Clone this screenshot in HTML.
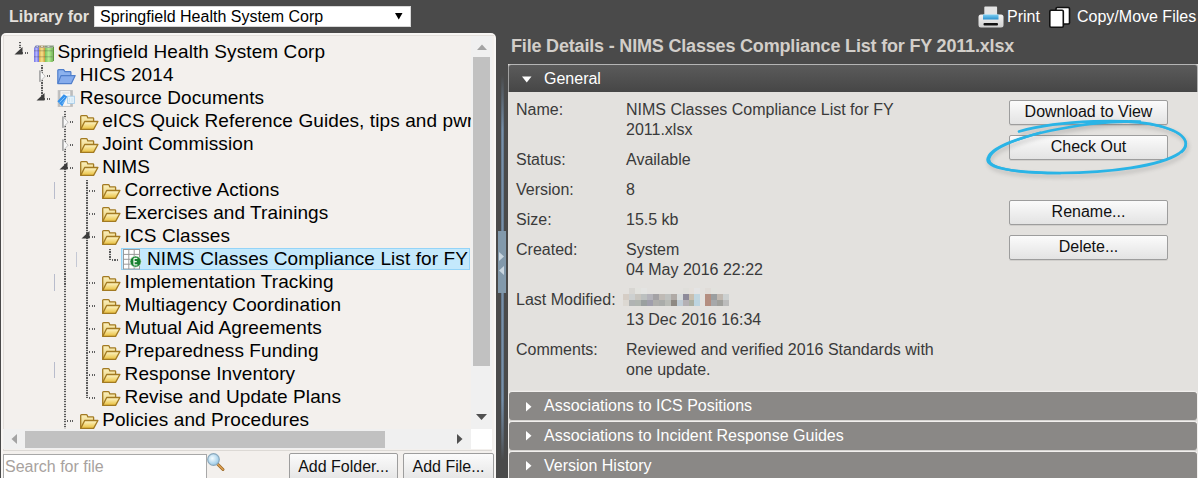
<!DOCTYPE html>
<html><head><meta charset="utf-8">
<style>
*{margin:0;padding:0}
html,body{width:1198px;height:478px;overflow:hidden;background:#4a4a4a;font-family:"Liberation Sans", sans-serif;position:relative}
.ab{position:absolute;white-space:nowrap}
.ic{position:absolute;display:block}
.vl{position:absolute;width:2px;background:repeating-linear-gradient(to bottom,#5a5a5a 0 1.25px,rgba(150,150,150,0.3) 1.25px 2.5px)}
.hl{position:absolute;height:2px;background:repeating-linear-gradient(to right,#606060 0 1.25px,transparent 1.25px 2.5px)}
.tt{position:absolute;white-space:nowrap;font-size:19px;line-height:23px;letter-spacing:0.09px;color:#000}
.lbl{position:absolute;left:516px;margin-top:1px;font-size:16px;line-height:20px;color:#3a3a3a;white-space:nowrap}
.val{position:absolute;left:626px;margin-top:1px;font-size:16px;line-height:20px;color:#3a3a3a;white-space:nowrap}
.btn{position:absolute;box-sizing:border-box;border:1px solid #9d9d9d;border-radius:2px;background:linear-gradient(#fbfbfb,#e3e3e3);font-size:16px;line-height:22px;text-align:center;color:#111;white-space:nowrap;box-shadow:0 1px 0 rgba(0,0,0,0.08)}
.acc{position:absolute;left:508px;width:690px;height:30px;box-sizing:border-box;background:#8a8886;border:1px solid #f2f0ee;border-bottom:1px solid #d6d4d1;border-radius:4px;color:#fff;font-size:16px;line-height:28px}
</style></head><body>
<!-- top bar -->
<div class="ab" style="left:9px;top:5px;font-size:16px;font-weight:bold;line-height:24px;color:#e4e0dc">Library for</div>
<div class="ab" style="left:94px;top:6px;width:317px;height:21px;background:#fff;box-sizing:border-box;border:1px solid #d8d8d8"></div>
<div class="ab" style="left:100px;top:6px;font-size:16px;line-height:22px;color:#000">Springfield Health System Corp</div>
<svg class="ic" style="left:395px;top:13px" width="8" height="7" viewBox="0 0 8 7"><path d="M0,0 H7.5 L3.75,6.5 Z" fill="#000"/></svg>

<!-- print icon -->
<svg class="ic" style="left:978px;top:6px" width="26" height="22" viewBox="0 0 26 22">
<defs><linearGradient id="pb" x1="0" y1="0" x2="0" y2="1"><stop offset="0" stop-color="#f4f4f4"/><stop offset="1" stop-color="#cfcfcf"/></linearGradient>
<linearGradient id="pbl" x1="0" y1="0" x2="0" y2="1"><stop offset="0" stop-color="#7fd0f4"/><stop offset="1" stop-color="#2a90cc"/></linearGradient></defs>
<rect x="6.3" y="0.6" width="12.8" height="9" rx="0.8" fill="#e4e4e4"/>
<rect x="0.5" y="8.5" width="25" height="13" rx="2.5" fill="url(#pb)"/>
<rect x="5" y="8.5" width="15.5" height="5" fill="url(#pbl)"/>
<rect x="5.5" y="17" width="14.5" height="2.6" rx="1" fill="#111"/>
</svg>
<div class="ab" style="left:1007px;top:6px;font-size:16px;line-height:22px;color:#fff">Print</div>
<!-- copy icon -->
<svg class="ic" style="left:1048px;top:6px" width="24" height="23" viewBox="0 0 24 23">
<rect x="8" y="1.5" width="13.5" height="16.5" rx="1.2" fill="#fff" stroke="#111" stroke-width="1.6"/>
<rect x="1.8" y="4.3" width="13.5" height="17" rx="1.2" fill="#fff" stroke="#111" stroke-width="1.6"/>
</svg>
<div class="ab" style="left:1077px;top:6px;font-size:16px;line-height:22px;color:#fff">Copy/Move Files</div>

<!-- tree panel -->
<div class="ab" style="left:1px;top:33px;width:495px;height:460px;background:#f8f6f4;border-radius:5px 5px 0 0"></div>
<div class="ab" style="left:3px;top:35px;width:490px;height:414px;background:#f3f0ed;border-top:1px solid #e4e0dc;border-left:1px solid #e8e4e0"></div>
<div class="ab" style="left:3px;top:450px;width:489px;height:28px;background:#f3f0ed;border-top:1px solid #dcd9d5"></div>
<div class="ab" style="left:3px;top:36px;width:1px;height:414px;background:#e2deda"></div>
<!-- tree viewport -->
<div class="ab" style="left:3px;top:36px;width:468px;height:393px;overflow:hidden">
<div style="position:absolute;left:-3px;top:-36px;width:600px;height:500px">
<div style="position:absolute;left:121px;top:248px;width:349px;height:22px;box-sizing:border-box;background:#c4e9fc;border:1px solid #94d4f8"></div>
<div class="vl" style="left:19px;top:42px;height:6px"></div>
<div class="vl" style="left:41px;top:65px;height:31px"></div>
<div class="vl" style="left:64px;top:111px;height:319px"></div>
<div class="vl" style="left:86px;top:180px;height:218px"></div>
<div class="vl" style="left:109px;top:249px;height:11px"></div>
<div class="hl" style="left:22px;top:52px;width:6px"></div>
<svg class="ic" style="left:14px;top:47px" width="9" height="8" viewBox="0 0 9 8"><path d="M0.5,7.5 L8.5,7.5 L8.5,0 Z" fill="#3c3c3c"/></svg>
<svg class="ic" style="left:34px;top:44.5px" width="21" height="18" viewBox="0 0 21 18">
<defs>
<linearGradient id="bkp" x1="0" y1="0" x2="1" y2="0"><stop offset="0" stop-color="#7676e6"/><stop offset="0.5" stop-color="#b4b4ff"/><stop offset="1" stop-color="#6c6cd8"/></linearGradient>
<linearGradient id="bky" x1="0" y1="0" x2="1" y2="0"><stop offset="0" stop-color="#d8ae48"/><stop offset="0.5" stop-color="#f8e08c"/><stop offset="1" stop-color="#c89c3c"/></linearGradient>
<linearGradient id="bkg" x1="0" y1="0" x2="1" y2="0"><stop offset="0" stop-color="#78c058"/><stop offset="0.5" stop-color="#b8ec98"/><stop offset="1" stop-color="#78c058"/></linearGradient>
</defs>
<rect x="0" y="2.8" width="5" height="14.2" fill="url(#bkp)"/>
<rect x="5" y="2.8" width="6" height="14.2" fill="url(#bky)"/>
<rect x="11" y="2.8" width="7.5" height="14.2" fill="url(#bkg)"/>
<path d="M18.5,2.8 L20,1 V15.5 L18.5,17 Z" fill="#5a9838"/>
<path d="M0,2.8 L1.8,0.6 H5.5 L5,2.8 Z" fill="#6f76b8"/>
<path d="M5,2.8 L5.5,0.6 H10.5 L11,2.8 Z" fill="#a89468"/>
<path d="M11,2.8 L10.5,0.6 H20 L18.5,2.8 Z" fill="#889a80"/>
<path d="M2.5,1.4 H4 M7,1.4 H9 M13.5,1.4 H15.5" stroke="#e8ecf4" stroke-width="0.8"/>
<path d="M0,5.8 H18.5 M0,11.8 H18.5" stroke="#404040" stroke-width="0.7" opacity="0.45"/>
</svg>
<div class="tt" style="left:57.4px;top:39.5px">Springfield Health System Corp</div>
<div class="hl" style="left:44px;top:75px;width:6px"></div>
<svg class="ic" style="left:39px;top:70px" width="7" height="13" viewBox="0 0 7 13"><path d="M0.9,0.6 L6.2,6.2 L0.9,11.8 Z" fill="#f8f8f8" stroke="#c4c4c4" stroke-width="1"/><path d="M0.9,0.6 V11.8" stroke="#a0a0a0" stroke-width="1.4"/></svg>
<svg class="ic" style="left:57px;top:69px" width="19" height="16" viewBox="0 0 19 16">
<path d="M0.8,14.6 V1.6 Q0.8,0.6 1.8,0.6 H6.6 L8,2.6 H13.2 Q13.9,2.6 13.9,3.4 V7" fill="#8cb2ee" stroke="#4f7ecb" stroke-width="1.2"/>
<path d="M4,6.6 H18.2 L14.4,14.6 H0.8 Z" fill="#86acec" stroke="#4f7ecb" stroke-width="1.2" stroke-linejoin="round"/>
</svg>
<div class="tt" style="left:79.8px;top:62.5px">HICS 2014</div>
<div class="hl" style="left:44px;top:98px;width:6px"></div>
<svg class="ic" style="left:36px;top:93px" width="9" height="8" viewBox="0 0 9 8"><path d="M0.5,7.5 L8.5,7.5 L8.5,0 Z" fill="#3c3c3c"/></svg>
<svg class="ic" style="left:57px;top:90px" width="20" height="18" viewBox="0 0 20 18">
<rect x="1.2" y="0.6" width="14.2" height="15.8" fill="#f6f6f6" stroke="#c4c4c4" stroke-width="1"/>
<rect x="1.2" y="0.6" width="2.2" height="15.8" fill="#bdbdbd"/>
<rect x="13.2" y="0.6" width="2.2" height="15.8" fill="#bdbdbd"/>
<rect x="4.5" y="2.2" width="8" height="1.5" fill="#e0e0e0"/>
<rect x="10.6" y="6.2" width="6.8" height="7.2" fill="#e4f2fb" stroke="#a6cdea" stroke-width="0.9"/>
<path d="M12.5,8 V12 M15,8 V12" stroke="#c8e0f0" stroke-width="0.8"/>
<path d="M0.4,11.2 L6.8,4.2 L10.2,6.6 L5.2,16.6 Z" fill="#3592ec"/>
<path d="M2.6,12.6 L7.8,7.2 M5,13.8 L9,9" stroke="#9fd2fa" stroke-width="0.8"/>
</svg>
<div class="tt" style="left:79.8px;top:85.5px">Resource Documents</div>
<div class="hl" style="left:67px;top:121px;width:6px"></div>
<svg class="ic" style="left:62px;top:116px" width="7" height="13" viewBox="0 0 7 13"><path d="M0.9,0.6 L6.2,6.2 L0.9,11.8 Z" fill="#f8f8f8" stroke="#c4c4c4" stroke-width="1"/><path d="M0.9,0.6 V11.8" stroke="#a0a0a0" stroke-width="1.4"/></svg>
<svg class="ic" style="left:80px;top:115px" width="19" height="16" viewBox="0 0 19 16">
<defs><linearGradient id="fg80_115" x1="0" y1="0" x2="0" y2="1"><stop offset="0" stop-color="#fff8cc"/><stop offset="1" stop-color="#e8be3a"/></linearGradient>
<linearGradient id="bfg80_115" x1="0" y1="0" x2="0" y2="1"><stop offset="0" stop-color="#fbf0bc"/><stop offset="1" stop-color="#e6cb70"/></linearGradient></defs>
<path d="M0.7,14.4 V1.5 Q0.7,0.7 1.5,0.7 H6.3 Q6.9,0.7 7.2,1.3 L7.8,2.9 H12.9 Q13.6,2.9 13.6,3.6 V7" fill="url(#bfg80_115)" stroke="#a27a22" stroke-width="1.3"/>
<path d="M4.7,6.5 H17.9 L13.6,14.4 H0.7 Z" fill="url(#fg80_115)" stroke="#a27a22" stroke-width="1.3" stroke-linejoin="round"/>
</svg>
<div class="tt" style="left:102.2px;top:108.5px">eICS Quick Reference Guides, tips and pwr</div>
<div class="hl" style="left:67px;top:144px;width:6px"></div>
<svg class="ic" style="left:62px;top:139px" width="7" height="13" viewBox="0 0 7 13"><path d="M0.9,0.6 L6.2,6.2 L0.9,11.8 Z" fill="#f8f8f8" stroke="#c4c4c4" stroke-width="1"/><path d="M0.9,0.6 V11.8" stroke="#a0a0a0" stroke-width="1.4"/></svg>
<svg class="ic" style="left:80px;top:138px" width="19" height="16" viewBox="0 0 19 16">
<defs><linearGradient id="fg80_138" x1="0" y1="0" x2="0" y2="1"><stop offset="0" stop-color="#fff8cc"/><stop offset="1" stop-color="#e8be3a"/></linearGradient>
<linearGradient id="bfg80_138" x1="0" y1="0" x2="0" y2="1"><stop offset="0" stop-color="#fbf0bc"/><stop offset="1" stop-color="#e6cb70"/></linearGradient></defs>
<path d="M0.7,14.4 V1.5 Q0.7,0.7 1.5,0.7 H6.3 Q6.9,0.7 7.2,1.3 L7.8,2.9 H12.9 Q13.6,2.9 13.6,3.6 V7" fill="url(#bfg80_138)" stroke="#a27a22" stroke-width="1.3"/>
<path d="M4.7,6.5 H17.9 L13.6,14.4 H0.7 Z" fill="url(#fg80_138)" stroke="#a27a22" stroke-width="1.3" stroke-linejoin="round"/>
</svg>
<div class="tt" style="left:102.2px;top:131.5px">Joint Commission</div>
<div class="hl" style="left:67px;top:167px;width:6px"></div>
<svg class="ic" style="left:59px;top:162px" width="9" height="8" viewBox="0 0 9 8"><path d="M0.5,7.5 L8.5,7.5 L8.5,0 Z" fill="#3c3c3c"/></svg>
<svg class="ic" style="left:80px;top:161px" width="19" height="16" viewBox="0 0 19 16">
<defs><linearGradient id="fg80_161" x1="0" y1="0" x2="0" y2="1"><stop offset="0" stop-color="#fff8cc"/><stop offset="1" stop-color="#e8be3a"/></linearGradient>
<linearGradient id="bfg80_161" x1="0" y1="0" x2="0" y2="1"><stop offset="0" stop-color="#fbf0bc"/><stop offset="1" stop-color="#e6cb70"/></linearGradient></defs>
<path d="M0.7,14.4 V1.5 Q0.7,0.7 1.5,0.7 H6.3 Q6.9,0.7 7.2,1.3 L7.8,2.9 H12.9 Q13.6,2.9 13.6,3.6 V7" fill="url(#bfg80_161)" stroke="#a27a22" stroke-width="1.3"/>
<path d="M4.7,6.5 H17.9 L13.6,14.4 H0.7 Z" fill="url(#fg80_161)" stroke="#a27a22" stroke-width="1.3" stroke-linejoin="round"/>
</svg>
<div class="tt" style="left:102.2px;top:154.5px">NIMS</div>
<div class="hl" style="left:89px;top:190px;width:6px"></div>
<svg class="ic" style="left:102px;top:184px" width="19" height="16" viewBox="0 0 19 16">
<defs><linearGradient id="fg102_184" x1="0" y1="0" x2="0" y2="1"><stop offset="0" stop-color="#fff8cc"/><stop offset="1" stop-color="#e8be3a"/></linearGradient>
<linearGradient id="bfg102_184" x1="0" y1="0" x2="0" y2="1"><stop offset="0" stop-color="#fbf0bc"/><stop offset="1" stop-color="#e6cb70"/></linearGradient></defs>
<path d="M0.7,14.4 V1.5 Q0.7,0.7 1.5,0.7 H6.3 Q6.9,0.7 7.2,1.3 L7.8,2.9 H12.9 Q13.6,2.9 13.6,3.6 V7" fill="url(#bfg102_184)" stroke="#a27a22" stroke-width="1.3"/>
<path d="M4.7,6.5 H17.9 L13.6,14.4 H0.7 Z" fill="url(#fg102_184)" stroke="#a27a22" stroke-width="1.3" stroke-linejoin="round"/>
</svg>
<div class="tt" style="left:124.6px;top:177.5px">Corrective Actions</div>
<div class="hl" style="left:89px;top:213px;width:6px"></div>
<svg class="ic" style="left:102px;top:207px" width="19" height="16" viewBox="0 0 19 16">
<defs><linearGradient id="fg102_207" x1="0" y1="0" x2="0" y2="1"><stop offset="0" stop-color="#fff8cc"/><stop offset="1" stop-color="#e8be3a"/></linearGradient>
<linearGradient id="bfg102_207" x1="0" y1="0" x2="0" y2="1"><stop offset="0" stop-color="#fbf0bc"/><stop offset="1" stop-color="#e6cb70"/></linearGradient></defs>
<path d="M0.7,14.4 V1.5 Q0.7,0.7 1.5,0.7 H6.3 Q6.9,0.7 7.2,1.3 L7.8,2.9 H12.9 Q13.6,2.9 13.6,3.6 V7" fill="url(#bfg102_207)" stroke="#a27a22" stroke-width="1.3"/>
<path d="M4.7,6.5 H17.9 L13.6,14.4 H0.7 Z" fill="url(#fg102_207)" stroke="#a27a22" stroke-width="1.3" stroke-linejoin="round"/>
</svg>
<div class="tt" style="left:124.6px;top:200.5px">Exercises and Trainings</div>
<div class="hl" style="left:89px;top:236px;width:6px"></div>
<svg class="ic" style="left:81px;top:231px" width="9" height="8" viewBox="0 0 9 8"><path d="M0.5,7.5 L8.5,7.5 L8.5,0 Z" fill="#3c3c3c"/></svg>
<svg class="ic" style="left:102px;top:230px" width="19" height="16" viewBox="0 0 19 16">
<defs><linearGradient id="fg102_230" x1="0" y1="0" x2="0" y2="1"><stop offset="0" stop-color="#fff8cc"/><stop offset="1" stop-color="#e8be3a"/></linearGradient>
<linearGradient id="bfg102_230" x1="0" y1="0" x2="0" y2="1"><stop offset="0" stop-color="#fbf0bc"/><stop offset="1" stop-color="#e6cb70"/></linearGradient></defs>
<path d="M0.7,14.4 V1.5 Q0.7,0.7 1.5,0.7 H6.3 Q6.9,0.7 7.2,1.3 L7.8,2.9 H12.9 Q13.6,2.9 13.6,3.6 V7" fill="url(#bfg102_230)" stroke="#a27a22" stroke-width="1.3"/>
<path d="M4.7,6.5 H17.9 L13.6,14.4 H0.7 Z" fill="url(#fg102_230)" stroke="#a27a22" stroke-width="1.3" stroke-linejoin="round"/>
</svg>
<div class="tt" style="left:124.6px;top:223.5px">ICS Classes</div>
<div class="hl" style="left:112px;top:259px;width:6px"></div>
<svg class="ic" style="left:123px;top:249px" width="20" height="21" viewBox="0 0 20 21">
<rect x="0.5" y="0.5" width="16" height="19.5" fill="#fff" stroke="#9a9a9a" stroke-width="1"/>
<path d="M5.8,0.5 V20 M11.2,0.5 V20 M0.5,5.4 H16.5 M0.5,10.3 H16.5 M0.5,15.2 H16.5" stroke="#9a9a9a" stroke-width="1"/>
<circle cx="12.6" cy="12.6" r="5.6" fill="#17802f" stroke="#e6f2e6" stroke-width="0.7"/>
<path d="M10.8,9.4 H14.4 M10.8,12.6 H13.8 M10.8,15.8 H14.4 M11,9.4 V15.8" stroke="#e8f4e8" stroke-width="1.3"/>
</svg>
<div class="tt" style="left:147.0px;top:246.5px">NIMS Classes Compliance List for FY 2011.xlsx</div>
<div class="hl" style="left:89px;top:282px;width:6px"></div>
<svg class="ic" style="left:102px;top:276px" width="19" height="16" viewBox="0 0 19 16">
<defs><linearGradient id="fg102_276" x1="0" y1="0" x2="0" y2="1"><stop offset="0" stop-color="#fff8cc"/><stop offset="1" stop-color="#e8be3a"/></linearGradient>
<linearGradient id="bfg102_276" x1="0" y1="0" x2="0" y2="1"><stop offset="0" stop-color="#fbf0bc"/><stop offset="1" stop-color="#e6cb70"/></linearGradient></defs>
<path d="M0.7,14.4 V1.5 Q0.7,0.7 1.5,0.7 H6.3 Q6.9,0.7 7.2,1.3 L7.8,2.9 H12.9 Q13.6,2.9 13.6,3.6 V7" fill="url(#bfg102_276)" stroke="#a27a22" stroke-width="1.3"/>
<path d="M4.7,6.5 H17.9 L13.6,14.4 H0.7 Z" fill="url(#fg102_276)" stroke="#a27a22" stroke-width="1.3" stroke-linejoin="round"/>
</svg>
<div class="tt" style="left:124.6px;top:269.5px">Implementation Tracking</div>
<div class="hl" style="left:89px;top:305px;width:6px"></div>
<svg class="ic" style="left:102px;top:299px" width="19" height="16" viewBox="0 0 19 16">
<defs><linearGradient id="fg102_299" x1="0" y1="0" x2="0" y2="1"><stop offset="0" stop-color="#fff8cc"/><stop offset="1" stop-color="#e8be3a"/></linearGradient>
<linearGradient id="bfg102_299" x1="0" y1="0" x2="0" y2="1"><stop offset="0" stop-color="#fbf0bc"/><stop offset="1" stop-color="#e6cb70"/></linearGradient></defs>
<path d="M0.7,14.4 V1.5 Q0.7,0.7 1.5,0.7 H6.3 Q6.9,0.7 7.2,1.3 L7.8,2.9 H12.9 Q13.6,2.9 13.6,3.6 V7" fill="url(#bfg102_299)" stroke="#a27a22" stroke-width="1.3"/>
<path d="M4.7,6.5 H17.9 L13.6,14.4 H0.7 Z" fill="url(#fg102_299)" stroke="#a27a22" stroke-width="1.3" stroke-linejoin="round"/>
</svg>
<div class="tt" style="left:124.6px;top:292.5px">Multiagency Coordination</div>
<div class="hl" style="left:89px;top:328px;width:6px"></div>
<svg class="ic" style="left:102px;top:322px" width="19" height="16" viewBox="0 0 19 16">
<defs><linearGradient id="fg102_322" x1="0" y1="0" x2="0" y2="1"><stop offset="0" stop-color="#fff8cc"/><stop offset="1" stop-color="#e8be3a"/></linearGradient>
<linearGradient id="bfg102_322" x1="0" y1="0" x2="0" y2="1"><stop offset="0" stop-color="#fbf0bc"/><stop offset="1" stop-color="#e6cb70"/></linearGradient></defs>
<path d="M0.7,14.4 V1.5 Q0.7,0.7 1.5,0.7 H6.3 Q6.9,0.7 7.2,1.3 L7.8,2.9 H12.9 Q13.6,2.9 13.6,3.6 V7" fill="url(#bfg102_322)" stroke="#a27a22" stroke-width="1.3"/>
<path d="M4.7,6.5 H17.9 L13.6,14.4 H0.7 Z" fill="url(#fg102_322)" stroke="#a27a22" stroke-width="1.3" stroke-linejoin="round"/>
</svg>
<div class="tt" style="left:124.6px;top:315.5px">Mutual Aid Agreements</div>
<div class="hl" style="left:89px;top:351px;width:6px"></div>
<svg class="ic" style="left:102px;top:345px" width="19" height="16" viewBox="0 0 19 16">
<defs><linearGradient id="fg102_345" x1="0" y1="0" x2="0" y2="1"><stop offset="0" stop-color="#fff8cc"/><stop offset="1" stop-color="#e8be3a"/></linearGradient>
<linearGradient id="bfg102_345" x1="0" y1="0" x2="0" y2="1"><stop offset="0" stop-color="#fbf0bc"/><stop offset="1" stop-color="#e6cb70"/></linearGradient></defs>
<path d="M0.7,14.4 V1.5 Q0.7,0.7 1.5,0.7 H6.3 Q6.9,0.7 7.2,1.3 L7.8,2.9 H12.9 Q13.6,2.9 13.6,3.6 V7" fill="url(#bfg102_345)" stroke="#a27a22" stroke-width="1.3"/>
<path d="M4.7,6.5 H17.9 L13.6,14.4 H0.7 Z" fill="url(#fg102_345)" stroke="#a27a22" stroke-width="1.3" stroke-linejoin="round"/>
</svg>
<div class="tt" style="left:124.6px;top:338.5px">Preparedness Funding</div>
<div class="hl" style="left:89px;top:374px;width:6px"></div>
<svg class="ic" style="left:102px;top:368px" width="19" height="16" viewBox="0 0 19 16">
<defs><linearGradient id="fg102_368" x1="0" y1="0" x2="0" y2="1"><stop offset="0" stop-color="#fff8cc"/><stop offset="1" stop-color="#e8be3a"/></linearGradient>
<linearGradient id="bfg102_368" x1="0" y1="0" x2="0" y2="1"><stop offset="0" stop-color="#fbf0bc"/><stop offset="1" stop-color="#e6cb70"/></linearGradient></defs>
<path d="M0.7,14.4 V1.5 Q0.7,0.7 1.5,0.7 H6.3 Q6.9,0.7 7.2,1.3 L7.8,2.9 H12.9 Q13.6,2.9 13.6,3.6 V7" fill="url(#bfg102_368)" stroke="#a27a22" stroke-width="1.3"/>
<path d="M4.7,6.5 H17.9 L13.6,14.4 H0.7 Z" fill="url(#fg102_368)" stroke="#a27a22" stroke-width="1.3" stroke-linejoin="round"/>
</svg>
<div class="tt" style="left:124.6px;top:361.5px">Response Inventory</div>
<div class="hl" style="left:89px;top:397px;width:6px"></div>
<svg class="ic" style="left:102px;top:391px" width="19" height="16" viewBox="0 0 19 16">
<defs><linearGradient id="fg102_391" x1="0" y1="0" x2="0" y2="1"><stop offset="0" stop-color="#fff8cc"/><stop offset="1" stop-color="#e8be3a"/></linearGradient>
<linearGradient id="bfg102_391" x1="0" y1="0" x2="0" y2="1"><stop offset="0" stop-color="#fbf0bc"/><stop offset="1" stop-color="#e6cb70"/></linearGradient></defs>
<path d="M0.7,14.4 V1.5 Q0.7,0.7 1.5,0.7 H6.3 Q6.9,0.7 7.2,1.3 L7.8,2.9 H12.9 Q13.6,2.9 13.6,3.6 V7" fill="url(#bfg102_391)" stroke="#a27a22" stroke-width="1.3"/>
<path d="M4.7,6.5 H17.9 L13.6,14.4 H0.7 Z" fill="url(#fg102_391)" stroke="#a27a22" stroke-width="1.3" stroke-linejoin="round"/>
</svg>
<div class="tt" style="left:124.6px;top:384.5px">Revise and Update Plans</div>
<div class="hl" style="left:67px;top:420px;width:6px"></div>
<svg class="ic" style="left:80px;top:414px" width="19" height="16" viewBox="0 0 19 16">
<defs><linearGradient id="fg80_414" x1="0" y1="0" x2="0" y2="1"><stop offset="0" stop-color="#fff8cc"/><stop offset="1" stop-color="#e8be3a"/></linearGradient>
<linearGradient id="bfg80_414" x1="0" y1="0" x2="0" y2="1"><stop offset="0" stop-color="#fbf0bc"/><stop offset="1" stop-color="#e6cb70"/></linearGradient></defs>
<path d="M0.7,14.4 V1.5 Q0.7,0.7 1.5,0.7 H6.3 Q6.9,0.7 7.2,1.3 L7.8,2.9 H12.9 Q13.6,2.9 13.6,3.6 V7" fill="url(#bfg80_414)" stroke="#a27a22" stroke-width="1.3"/>
<path d="M4.7,6.5 H17.9 L13.6,14.4 H0.7 Z" fill="url(#fg80_414)" stroke="#a27a22" stroke-width="1.3" stroke-linejoin="round"/>
</svg>
<div class="tt" style="left:102.2px;top:407.5px">Policies and Procedures</div>
<div style="position:absolute;left:54px;top:182px;width:1px;height:17px;background:#b8bccc"></div>
<div style="position:absolute;left:76px;top:252px;width:1px;height:15px;background:#c4c8d4"></div>
<div style="position:absolute;left:54px;top:274px;width:1px;height:17px;background:#b8bccc"></div>
<div style="position:absolute;left:54px;top:362px;width:1px;height:16px;background:#b8bccc"></div>
</div></div>
<!-- vertical scrollbar -->
<div class="ab" style="left:471px;top:36px;width:21px;height:393px;background:#f0f0f0"></div>
<div class="ab" style="left:473px;top:57px;width:17px;height:309px;background:#c1c1c1"></div>
<svg class="ic" style="left:477px;top:44px" width="10" height="6" viewBox="0 0 10 6"><path d="M0,6 H10 L5,0.5 Z" fill="#a3a3a3"/></svg>
<svg class="ic" style="left:476px;top:414px" width="11" height="6" viewBox="0 0 11 6"><path d="M0,0 H11 L5.5,6 Z" fill="#505050"/></svg>
<!-- horizontal scrollbar -->
<div class="ab" style="left:3px;top:429px;width:468px;height:20px;background:#f0f0f0"></div>
<div class="ab" style="left:25px;top:431px;width:360px;height:17px;background:#c1c1c1"></div>
<svg class="ic" style="left:11px;top:434px" width="6" height="10" viewBox="0 0 6 10"><path d="M6,0 V10 L0.5,5 Z" fill="#a3a3a3"/></svg>
<svg class="ic" style="left:457px;top:434px" width="6" height="10" viewBox="0 0 6 10"><path d="M0,0 V10 L5.5,5 Z" fill="#505050"/></svg>
<div class="ab" style="left:471px;top:429px;width:21px;height:20px;background:#fff"></div>
<!-- search -->
<div class="ab" style="left:3px;top:454px;width:204px;height:30px;background:#fff;box-sizing:border-box;border:1px solid #a8a8a8"></div>
<div class="ab" style="left:5px;top:456px;font-size:16px;line-height:22px;color:#a8a29e">Search for file</div>
<svg class="ic" style="left:206px;top:452px" width="20" height="20" viewBox="0 0 20 20">
<defs><radialGradient id="mg" cx="0.4" cy="0.4" r="0.6"><stop offset="0" stop-color="#f4fcff"/><stop offset="1" stop-color="#9ccbe8"/></radialGradient></defs>
<path d="M11,11.5 L17,17.5" stroke="#9a6a2a" stroke-width="3" stroke-linecap="round"/>
<path d="M11,11.5 L17,17.5" stroke="#e0a050" stroke-width="1.4" stroke-linecap="round"/>
<circle cx="7.5" cy="7.5" r="5.8" fill="url(#mg)" stroke="#8aa8bc" stroke-width="1.2"/>
</svg>
<div class="btn" style="left:289px;top:453px;width:109px;height:30px;line-height:26px">Add Folder...</div>
<div class="btn" style="left:403px;top:453px;width:91px;height:30px;line-height:26px">Add File...</div>

<!-- splitter -->
<div class="ab" style="left:501px;top:75px;width:3px;height:403px;background:linear-gradient(to bottom,rgba(74,74,74,1) 0,rgba(74,74,74,0) 55px,rgba(74,74,74,0) 325px,rgba(74,74,74,0.6) 365px,rgba(74,74,74,1) 385px),linear-gradient(to right,#5c7086,#7890a8 50%,#5c7086)"></div>
<div class="ab" style="left:498px;top:231px;width:8px;height:62px;background:#8299ab"></div>
<svg class="ic" style="left:498px;top:249.5px" width="8" height="30" viewBox="0 0 8 30"><path d="M1,2 L6,6.5 L1,11 Z" fill="#c9d6e0"/><path d="M6,16 L1,20.5 L6,25 Z" fill="#c9d6e0"/></svg>

<!-- header -->
<div class="ab" style="left:511px;top:34px;font-size:18px;font-weight:bold;line-height:24px;letter-spacing:-0.18px;color:#d2cec9">File Details - NIMS Classes Compliance List for FY 2011.xlsx</div>

<!-- General panel -->
<div class="ab" style="left:508px;top:64px;width:690px;height:326px;background:#e3e1de"></div>
<div class="ab" style="left:508px;top:64px;width:690px;height:28px;box-sizing:border-box;background:linear-gradient(#5b5b5b,#464646);border-top:1px solid #b5b5b5;border-left:1px solid #a0a0a0;border-right:1px solid #b0b0b0;border-radius:3px 3px 0 0"></div>
<svg class="ic" style="left:522px;top:76px" width="10" height="7" viewBox="0 0 10 7"><path d="M0,0.5 H9.5 L4.75,6.5 Z" fill="#fff"/></svg>
<div class="ab" style="left:544px;top:68px;font-size:16px;line-height:22px;color:#fff">General</div>

<div class="lbl" style="top:99px">Name:</div>
<div class="val" style="top:99px">NIMS Classes Compliance List for FY<br>2011.xlsx</div>
<div class="lbl" style="top:149px">Status:</div>
<div class="val" style="top:149px">Available</div>
<div class="lbl" style="top:179px">Version:</div>
<div class="val" style="top:179px">8</div>
<div class="lbl" style="top:209px">Size:</div>
<div class="val" style="top:209px">15.5 kb</div>
<div class="lbl" style="top:239px">Created:</div>
<div class="val" style="top:239px">System<br>04 May 2016 22:22</div>
<div class="lbl" style="top:289px">Last Modified:</div>
<div style="position:absolute;left:629.0px;top:288px;width:6px;height:6px;background:#d8d6d2"></div>
<div style="position:absolute;left:634.9px;top:288px;width:6px;height:6px;background:#e2e2de"></div>
<div style="position:absolute;left:640.9px;top:288px;width:6px;height:6px;background:#e4e4e2"></div>
<div style="position:absolute;left:682.5px;top:288px;width:6px;height:6px;background:#e0dfdb"></div>
<div style="position:absolute;left:688.5px;top:288px;width:6px;height:6px;background:#e4e0dc"></div>
<div style="position:absolute;left:694.4px;top:288px;width:6px;height:6px;background:#e4e4e4"></div>
<div style="position:absolute;left:705.0px;top:288px;width:6px;height:6px;background:#e0dcd8"></div>
<div style="position:absolute;left:711.0px;top:288px;width:6px;height:6px;background:#e2e2de"></div>
<div style="position:absolute;left:623.0px;top:294px;width:6px;height:6px;background:#d5cdc5"></div>
<div style="position:absolute;left:629.0px;top:294px;width:6px;height:6px;background:#cdd0d0"></div>
<div style="position:absolute;left:634.9px;top:294px;width:6px;height:6px;background:#c8c5bf"></div>
<div style="position:absolute;left:640.9px;top:294px;width:6px;height:6px;background:#bcc0bf"></div>
<div style="position:absolute;left:646.8px;top:294px;width:6px;height:6px;background:#b4b3ba"></div>
<div style="position:absolute;left:652.8px;top:294px;width:6px;height:6px;background:#a4a2a5"></div>
<div style="position:absolute;left:658.7px;top:294px;width:6px;height:6px;background:#bfbab5"></div>
<div style="position:absolute;left:664.6px;top:294px;width:6px;height:6px;background:#bfc1bf"></div>
<div style="position:absolute;left:670.6px;top:294px;width:6px;height:6px;background:#b0aaa6"></div>
<div style="position:absolute;left:676.5px;top:294px;width:6px;height:6px;background:#d8dcdc"></div>
<div style="position:absolute;left:682.5px;top:294px;width:6px;height:6px;background:#8e8b9a"></div>
<div style="position:absolute;left:688.5px;top:294px;width:6px;height:6px;background:#c9bfaf"></div>
<div style="position:absolute;left:694.4px;top:294px;width:6px;height:6px;background:#c0d6e0"></div>
<div style="position:absolute;left:705.0px;top:294px;width:6px;height:6px;background:#b48e80"></div>
<div style="position:absolute;left:711.0px;top:294px;width:6px;height:6px;background:#9a9ea0"></div>
<div style="position:absolute;left:717.0px;top:294px;width:6px;height:6px;background:#c0b8b0"></div>
<div style="position:absolute;left:723.0px;top:294px;width:6px;height:6px;background:#ccd0d0"></div>
<div style="position:absolute;left:623.0px;top:300px;width:6px;height:6px;background:#dcd8d2"></div>
<div style="position:absolute;left:629.0px;top:300px;width:6px;height:6px;background:#b0b3b3"></div>
<div style="position:absolute;left:634.9px;top:300px;width:6px;height:6px;background:#b0b5b0"></div>
<div style="position:absolute;left:640.9px;top:300px;width:6px;height:6px;background:#9aa0a0"></div>
<div style="position:absolute;left:646.8px;top:300px;width:6px;height:6px;background:#a09fac"></div>
<div style="position:absolute;left:652.8px;top:300px;width:6px;height:6px;background:#afafac"></div>
<div style="position:absolute;left:658.7px;top:300px;width:6px;height:6px;background:#aaacaa"></div>
<div style="position:absolute;left:664.6px;top:300px;width:6px;height:6px;background:#b9bbb6"></div>
<div style="position:absolute;left:670.6px;top:300px;width:6px;height:6px;background:#8e8983"></div>
<div style="position:absolute;left:676.5px;top:300px;width:6px;height:6px;background:#c0ccd6"></div>
<div style="position:absolute;left:682.5px;top:300px;width:6px;height:6px;background:#b4b0b4"></div>
<div style="position:absolute;left:688.5px;top:300px;width:6px;height:6px;background:#acb0a4"></div>
<div style="position:absolute;left:694.4px;top:300px;width:6px;height:6px;background:#bcd4e0"></div>
<div style="position:absolute;left:705.0px;top:300px;width:6px;height:6px;background:#b48e80"></div>
<div style="position:absolute;left:711.0px;top:300px;width:6px;height:6px;background:#a6a8aa"></div>
<div style="position:absolute;left:717.0px;top:300px;width:6px;height:6px;background:#a0a09c"></div>
<div style="position:absolute;left:723.0px;top:300px;width:6px;height:6px;background:#bcbcbc"></div>
<div class="val" style="top:309px">13 Dec 2016 16:34</div>
<div class="lbl" style="top:339px">Comments:</div>
<div class="val" style="top:339px">Reviewed and verified 2016 Standards with<br>one update.</div>

<div class="btn" style="left:1009px;top:100px;width:159px;height:25px">Download to View</div>
<div class="btn" style="left:1009px;top:135px;width:159px;height:25px">Check Out</div>
<div class="btn" style="left:1009px;top:200px;width:159px;height:25px">Rename...</div>
<div class="btn" style="left:1009px;top:235px;width:159px;height:25px">Delete...</div>

<!-- annotation ellipse -->
<svg class="ic" style="left:0;top:0" width="1198" height="478" viewBox="0 0 1198 478">
<defs><filter id="sh" x="-20%" y="-50%" width="140%" height="200%"><feGaussianBlur stdDeviation="2"/></filter></defs>
<g transform="translate(1.5,3)" opacity="0.3" filter="url(#sh)">
<path d="M1019,131.5 C1060,120 1130,118 1160,126 C1188,133.5 1191,145 1179,153.5 C1160,166 1110,173 1060,173 C1015,173 984,168 988,158 C991,146 1030,132 1090,124 C1110,121.5 1125,121 1140,121.5" fill="none" stroke="#606060" stroke-width="3"/>
</g>
<path d="M1019,131.5 C1060,120 1130,118 1160,126 C1188,133.5 1191,145 1179,153.5 C1160,166 1110,173 1060,173 C1015,173 984,168 988,158 C991,146 1030,132 1090,124 C1110,121.5 1125,121 1140,121.5" fill="none" stroke="#2ab4e6" stroke-width="2.7" stroke-linecap="round"/>
<path d="M1060,172.6 C1015,172.6 985.5,167.5 989,157.5 C992,147 1015,139 1040,132" fill="none" stroke="#2ab4e6" stroke-width="2.2" stroke-linecap="round" transform="translate(0.4,0.6)"/>
<path d="M1150,124.5 C1183,131 1192,142 1181,152.5" fill="none" stroke="#2ab4e6" stroke-width="1.6" stroke-linecap="round" transform="translate(0.8,0)"/>
</svg>

<!-- accordion headers -->
<div class="ab" style="left:508px;top:390px;width:690px;height:88px;background:#e6e4e1"></div>
<div class="acc" style="top:391px"></div>
<div class="acc" style="top:421px"></div>
<div class="acc" style="top:451px"></div>
<svg class="ic" style="left:526px;top:402px" width="6" height="10" viewBox="0 0 6 10"><path d="M0,0 V9.5 L5.5,4.75 Z" fill="#fff"/></svg>
<svg class="ic" style="left:526px;top:431px" width="6" height="10" viewBox="0 0 6 10"><path d="M0,0 V9.5 L5.5,4.75 Z" fill="#fff"/></svg>
<svg class="ic" style="left:526px;top:461px" width="6" height="10" viewBox="0 0 6 10"><path d="M0,0 V9.5 L5.5,4.75 Z" fill="#fff"/></svg>
<div class="ab" style="left:544px;top:395px;font-size:16px;line-height:22px;color:#fff">Associations to ICS Positions</div>
<div class="ab" style="left:544px;top:425px;font-size:16px;line-height:22px;color:#fff">Associations to Incident Response Guides</div>
<div class="ab" style="left:544px;top:455px;font-size:16px;line-height:22px;color:#fff">Version History</div>
</body></html>
